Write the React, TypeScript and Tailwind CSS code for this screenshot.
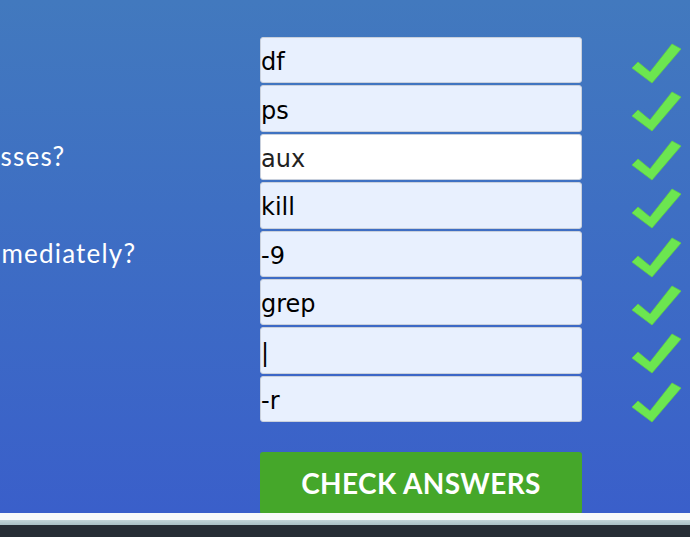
const rows = [
  { label: "Check disk space?", value: "df", autofill: true },
  { label: "List processes?", value: "ps", autofill: true },
  { label: "Which ps options show all processes?", value: "aux", autofill: false },
  { label: "Stop a process?", value: "kill", autofill: true },
  { label: "Which signal stops a program immediately?", value: "-9", autofill: true },
  { label: "Search in text?", value: "grep", autofill: true },
  { label: "Pipe symbol?", value: "|", autofill: true },
  { label: "Recursive option?", value: "-r", autofill: true },
];

function Check() {
  return (
    <svg width="52" height="42" viewBox="0 0 52 42" className="self-start mt-[5px] ml-[49px] shrink-0">
      <path d="M1 26 L7 20 L19 30 L41 2 L50 7 L21 41 Z" fill="#6ce650" stroke="#5fcf45" strokeWidth="0.8" strokeLinejoin="round" />
    </svg>
  );
}

export default function App() {
  return (
    <div className="flex flex-col h-[537px] w-full overflow-hidden" style={{ fontFamily: "Lato, 'Liberation Sans', sans-serif" }}>
      <section className="h-[513px] shrink-0 bg-gradient-to-b from-[#4279be] to-[#3a5fca] pt-[37px] overflow-hidden">
        <div className="flex flex-col gap-[2px]">
          {rows.map((r) => (
            <div key={r.value} className="flex items-center h-[46.4px]">
              <div className="w-[260px] shrink-0 overflow-visible whitespace-nowrap">
                <span className="block ml-[-405px] text-[26px] tracking-[1.2px] text-white font-['Lato',sans-serif]">{r.label}</span>
              </div>
              <input
                readOnly
                value={r.value}
                className={`w-[322px] h-full shrink-0 rounded-[3px] border border-[#c9d0dc] pl-0 pt-[4px] text-[24px] font-['DejaVu_Sans',sans-serif] outline-none ${
                  r.autofill ? "bg-[#e8f0fe] text-black" : "bg-white text-[#222]"
                }`}
              />
              <Check />
            </div>
          ))}
        </div>
        <button className="ml-[260px] mt-[30px] w-[322px] h-[62px] rounded-[3px] bg-[#45a72a] text-white text-[28px] font-bold tracking-[0.4px] font-['Lato',sans-serif]">
          CHECK ANSWERS
        </button>
      </section>
      <div className="h-[7px] shrink-0 bg-[#f8fafa]" />
      <div className="h-[5px] shrink-0 bg-gradient-to-b from-[#c3d5d9] to-[#a9c0c6]" />
      <div className="flex-1 bg-[#262d35]" />
    </div>
  );
}
